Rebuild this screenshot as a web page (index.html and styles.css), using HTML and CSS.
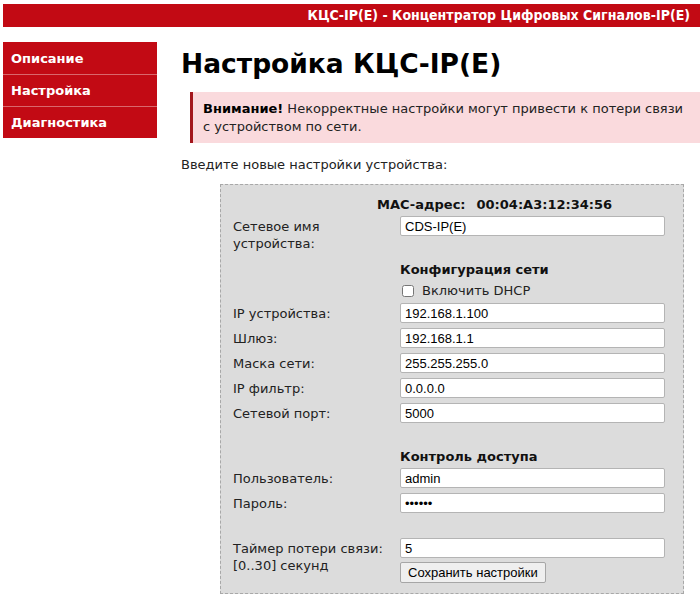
FILE: index.html
```html
<!DOCTYPE html>
<html lang="ru">
<head>
  <meta charset="UTF-8" />
  <title>Настройка - КЦС-IP(E)</title>
  <link rel="stylesheet" href="styles.css">
</head>
<body>
  <div class="header">КЦС-IP(E) - Концентратор Цифровых Сигналов-IP(E)</div>

  <div class="page">
    <div class="menu">
      <a href="#">Описание</a>
      <a href="#">Настройка</a>
      <a href="#">Диагностика</a>
    </div>

    <div class="content">
      <h1>Настройка КЦС-IP(E)</h1>

      <div class="warning">
        <b>Внимание!</b> Некорректные настройки могут привести к потери связи с устройством по сети.
      </div>

      <p class="intro">Введите новые настройки устройства:</p>

      <form class="settings">
        <div class="mac"><b>MAC-адрес:</b><b>00:04:A3:12:34:56</b></div>

        <div class="row">
          <label>Сетевое имя устройства:</label>
          <input type="text" value="CDS-IP(E)">
        </div>

        <div class="section">Конфигурация сети</div>
        <div class="row check">
          <span></span>
          <label class="cb"><input type="checkbox"> Включить DHCP</label>
        </div>
        <div class="row"><label>IP устройства:</label><input type="text" value="192.168.1.100"></div>
        <div class="row"><label>Шлюз:</label><input type="text" value="192.168.1.1"></div>
        <div class="row"><label>Маска сети:</label><input type="text" value="255.255.255.0"></div>
        <div class="row"><label>IP фильтр:</label><input type="text" value="0.0.0.0"></div>
        <div class="row"><label>Сетевой порт:</label><input type="text" value="5000"></div>

        <div class="section gap">Контроль доступа</div>
        <div class="row"><label>Пользователь:</label><input type="text" value="admin"></div>
        <div class="row"><label>Пароль:</label><input type="password" value="123456"></div>

        <div class="row timer">
          <label>Таймер потери связи:<br>[0..30] секунд</label>
          <div class="field">
            <input type="text" value="5">
            <button type="button">Сохранить настройки</button>
          </div>
        </div>
      </form>
    </div>
  </div>
</body>
</html>
```

FILE: styles.css
```css
body {
  margin: 0;
  padding: 4px 0 0 3px;
  font-family: "DejaVu Sans", Verdana, sans-serif;
  font-size: 13px;
  color: #222;
  background: #fff;
}

.header {
  background: #c20a14;
  color: white;
  height: 23px;
  line-height: 23px;
  text-align: right;
  padding-right: 10px;
  font-family: "DejaVu Sans Condensed", "DejaVu Sans", sans-serif;
  font-weight: bold;
  font-size: 14px;
}

.page {
  display: flex;
  margin-top: 15px;
}

.menu {
  width: 154px;
  flex-shrink: 0;
  display: flex;
  flex-direction: column;
  align-self: flex-start;
}

.menu a {
  display: block;
  background: #c20a14;
  color: white;
  text-decoration: none;
  font-weight: bold;
  height: 31px;
  line-height: 32px;
  padding-left: 8px;
  border-top: 1px solid #d9676c;
}

.menu a:first-child {
  border-top: 1px solid #c20a14;
}

.content {
  flex: 1;
  padding-left: 24px;
}

h1 {
  margin: 0;
  padding-top: 3px;
  font-size: 26.5px;
  line-height: 38px;
  color: #000;
}

.warning {
  margin: 9px 0 0 9px;
  background: #fadadd;
  border-left: 3px solid #a3161c;
  padding: 8px 12px 7px 10px;
  line-height: 18px;
  color: #222;
}

.warning b {
  color: #000;
}

.intro {
  margin: 14px 0 0 0;
}

.settings {
  margin: 12px 0 0 39px;
  width: 438px;
  border: 1px dashed #a8a8a8;
  background: #dcdcdc;
  padding: 9px 12px 10px 12px;
}

.mac {
  padding-left: 144px;
  padding-top: 3px;
  height: 19px;
  color: #111;
}

.mac b + b {
  margin-left: 11px;
}

.row {
  display: grid;
  grid-template-columns: 167px 265px;
  margin-bottom: 5px;
}

.row label {
  line-height: 17px;
  padding-top: 2px;
}

.row input[type="text"],
.row input[type="password"] {
  box-sizing: border-box;
  width: 265px;
  height: 20px;
  margin: 0;
  border: 1px solid #b4b4b4;
  border-radius: 2px;
  padding: 0 4px;
  font-family: "Liberation Sans", Arial, sans-serif;
  font-size: 13px;
  color: #000;
  background: white;
}

.section {
  padding-left: 167px;
  font-weight: bold;
  margin-top: 10px;
  height: 19px;
  color: #111;
}

.section.gap {
  margin-top: 26px;
}

.check {
  height: 19px;
  margin-bottom: 3px;
}

.row label.cb {
  padding-top: 0;
  display: flex;
  align-items: center;
}

.cb input {
  margin: 0 8px 0 2px;
  width: 12px;
  height: 12px;
}

.timer {
  margin-top: 25px;
  margin-bottom: 0;
}

.field {
  display: flex;
  flex-direction: column;
  align-items: flex-start;
}

button {
  margin-top: 4px;
  height: 21px;
  padding: 0 7px;
  font-family: "Liberation Sans", Arial, sans-serif;
  font-size: 13px;
  color: #000;
  background: #efefef;
  border: 1px solid #a6a6a6;
  border-radius: 2px;
}
```
